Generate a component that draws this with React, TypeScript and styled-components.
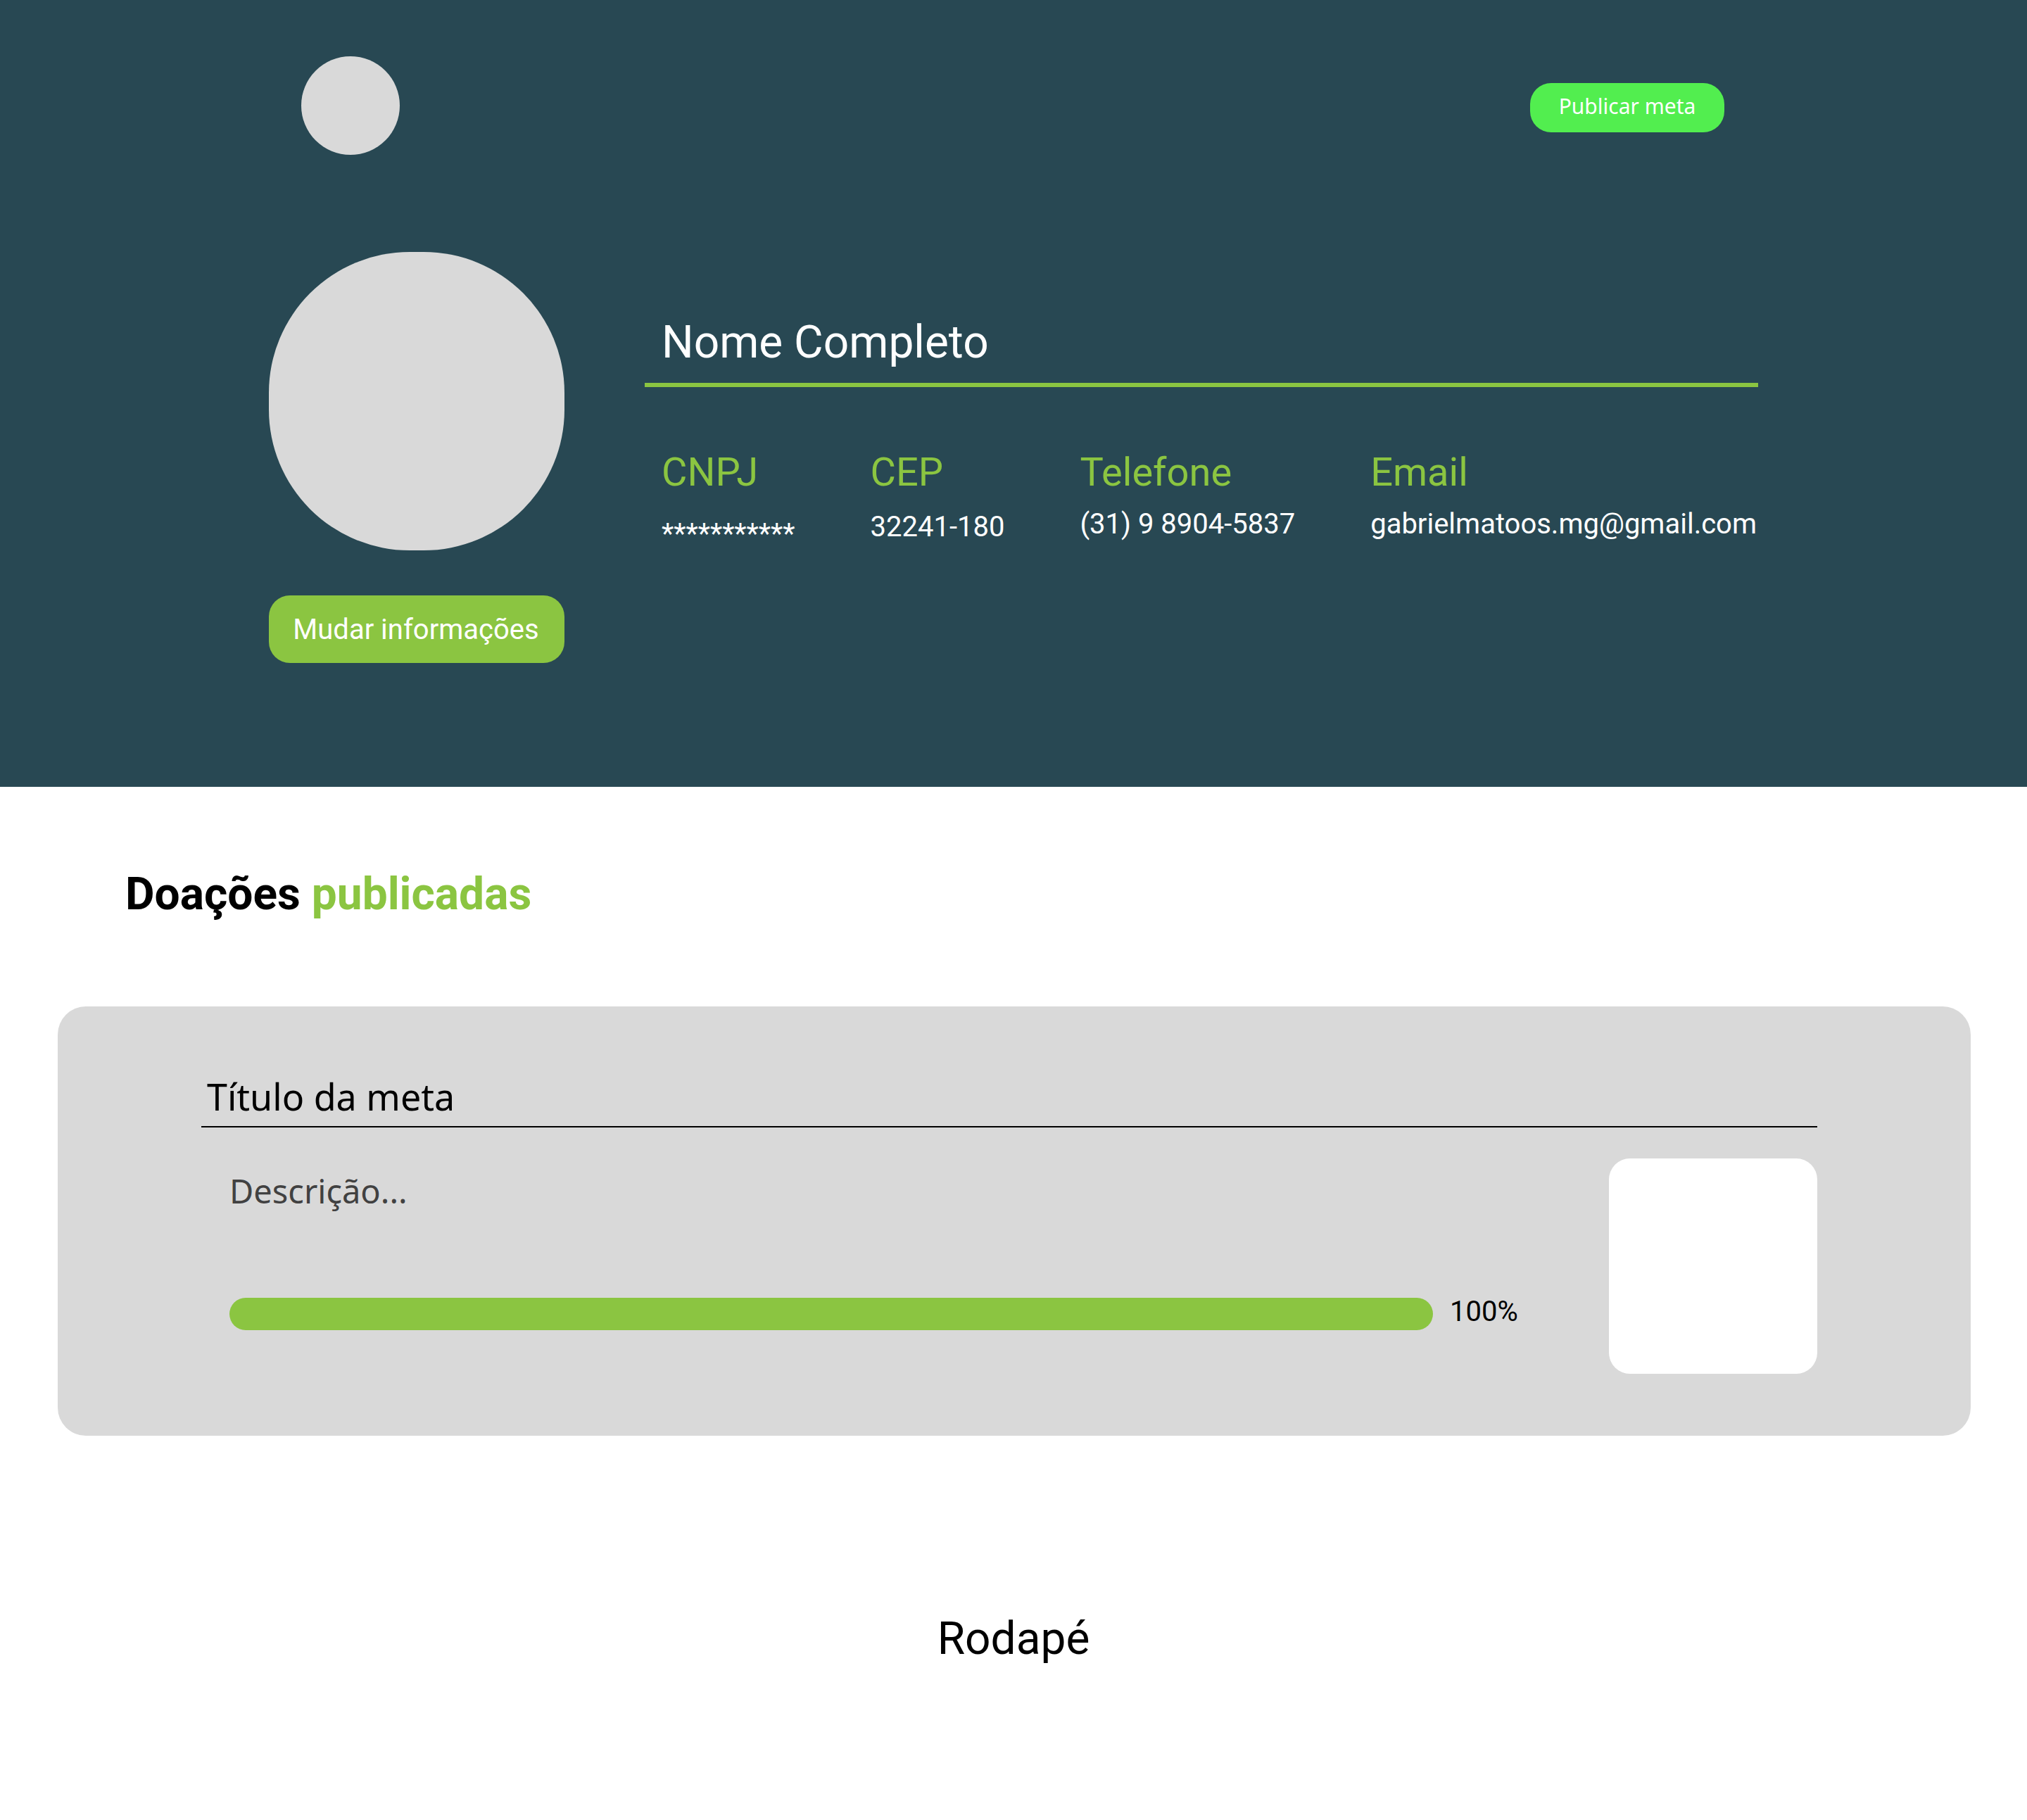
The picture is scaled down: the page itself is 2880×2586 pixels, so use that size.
import React from "react";
import styled, { createGlobalStyle } from "styled-components";

const color = {
  petrol: "#284853",
  lime: "#8bc541",
  publish: "#52ee4f",
  surface: "#d9d9d9",
  muted: "#414141",
};

const bodyFont = `Roboto, "Liberation Sans", sans-serif`;
const accentFont = `"Noto Sans", "Open Sans", sans-serif`;

const GlobalStyle = createGlobalStyle`
  *, *::before, *::after { box-sizing: border-box; }
  body {
    margin: 0;
    background: #ffffff;
    color: #000000;
    font-family: ${bodyFont};
  }
  h1, h2, h3, p, dl, dt, dd { margin: 0; font-weight: 400; }
`;

const Header = styled.header`
  padding: 80px 382px 176px;
  background: ${color.petrol};
  color: #ffffff;
`;

const Nav = styled.nav`
  display: flex;
  align-items: flex-start;
  justify-content: space-between;
  padding: 0 48px 0 46px;
`;

const Logo = styled.a`
  width: 140px;
  height: 140px;
  border-radius: 50%;
  background: ${color.surface};
`;

const NavActions = styled.div`
  padding-top: 38px;
`;

const Button = styled.button`
  display: block;
  border: 0;
  border-radius: 30px;
  color: #ffffff;
  text-align: center;
  cursor: pointer;
`;

const PublishButton = styled(Button)`
  min-width: 276px;
  padding: 12px 36px 16px;
  background: ${color.publish};
  font: 400 30px/42px ${accentFont};
`;

const EditButton = styled(Button)`
  width: 100%;
  padding: 24px 2px 22px 0;
  background: ${color.lime};
  font: 400 40px/50px ${bodyFont};
`;

const Profile = styled.section`
  display: flex;
  gap: 114px;
  padding-top: 138px;
`;

const ProfileAside = styled.div`
  display: flex;
  flex: 0 0 420px;
  flex-direction: column;
  gap: 64px;
`;

const Avatar = styled.div`
  height: 424px;
  border-radius: 200px;
  background: ${color.surface};
`;

const ProfileInfo = styled.div`
  flex: 1;
  padding-top: 90px;
`;

const Name = styled.h1`
  padding: 0 24px 18px;
  border-bottom: 6px solid ${color.lime};
  font-size: 64px;
  line-height: 78px;
`;

const Fields = styled.dl`
  display: flex;
  justify-content: space-between;
  padding: 88px 2px 0 24px;
`;

const Field = styled.div<{ $gap: number }>`
  display: flex;
  flex-direction: column;
  gap: ${({ $gap }) => $gap}px;
`;

const FieldLabel = styled.dt`
  color: ${color.lime};
  font-size: 56px;
  line-height: 66px;
`;

const FieldValue = styled.dd`
  font-size: 40px;
  line-height: 50px;
`;

const Donations = styled.main`
  padding: 114px 80px 0 82px;
`;

const SectionTitle = styled.h2`
  padding: 0 96px 120px;
  font-size: 64px;
  font-weight: 700;
  line-height: 78px;

  span { color: ${color.lime}; }
`;

const Card = styled.article`
  padding: 92px 218px 88px 204px;
  border-radius: 40px;
  background: ${color.surface};
  font-family: ${accentFont};
`;

const CardTitle = styled.h3`
  padding: 0 8px 6px;
  border-bottom: 2px solid #000000;
  font-size: 52px;
  line-height: 72px;
`;

const CardBody = styled.div`
  display: flex;
  gap: 128px;
  padding-top: 44px;
`;

const CardContent = styled.div`
  display: flex;
  flex: 1;
  flex-direction: column;
  justify-content: space-between;
  padding: 14px 0 62px 40px;
`;

const Description = styled.p`
  color: ${color.muted};
  font-size: 47px;
  line-height: 64px;
`;

const ProgressRow = styled.div`
  display: flex;
  align-items: flex-end;
  gap: 24px;
`;

const ProgressBar = styled.progress`
  appearance: none;
  flex: 1;
  height: 46px;
  border: 0;
  border-radius: 24px;
  overflow: hidden;
  background: #ffffff;

  &::-webkit-progress-bar { background: #ffffff; }
  &::-webkit-progress-value { background: ${color.lime}; }
  &::-moz-progress-bar { background: ${color.lime}; }
`;

const ProgressLabel = styled.label`
  flex: 0 0 98px;
  font: 400 40px/52px ${bodyFont};
`;

const Thumbnail = styled.div`
  flex: 0 0 296px;
  height: 306px;
  border-radius: 30px;
  background: #ffffff;
`;

const Footer = styled.footer`
  padding: 250px 0 218px;
  font-size: 64px;
  line-height: 78px;
  text-align: center;
`;

const fields = [
  { label: "CNPJ", value: "***********", gap: 30 },
  { label: "CEP", value: "32241-180", gap: 20 },
  { label: "Telefone", value: "(31) 9 8904-5837", gap: 16 },
  { label: "Email", value: "gabrielmatoos.mg@gmail.com", gap: 16 },
];

const goals = [
  { id: "meta-1", title: "Título da meta", description: "Descrição...", progress: 100 },
];

export default function App() {
  return (
    <>
      <GlobalStyle />
      <Header>
        <Nav>
          <Logo href="#" />
          <NavActions>
            <PublishButton type="button">Publicar meta</PublishButton>
          </NavActions>
        </Nav>
        <Profile>
          <ProfileAside>
            <Avatar />
            <EditButton type="button">Mudar informações</EditButton>
          </ProfileAside>
          <ProfileInfo>
            <Name>Nome Completo</Name>
            <Fields>
              {fields.map((field) => (
                <Field key={field.label} $gap={field.gap}>
                  <FieldLabel>{field.label}</FieldLabel>
                  <FieldValue>{field.value}</FieldValue>
                </Field>
              ))}
            </Fields>
          </ProfileInfo>
        </Profile>
      </Header>
      <Donations>
        <SectionTitle>
          Doações <span>publicadas</span>
        </SectionTitle>
        {goals.map((goal) => (
          <Card key={goal.id}>
            <CardTitle>{goal.title}</CardTitle>
            <CardBody>
              <CardContent>
                <Description>{goal.description}</Description>
                <ProgressRow>
                  <ProgressBar id={goal.id} value={goal.progress} max={100} />
                  <ProgressLabel htmlFor={goal.id}>{goal.progress}%</ProgressLabel>
                </ProgressRow>
              </CardContent>
              <Thumbnail />
            </CardBody>
          </Card>
        ))}
      </Donations>
      <Footer>Rodapé</Footer>
    </>
  );
}
